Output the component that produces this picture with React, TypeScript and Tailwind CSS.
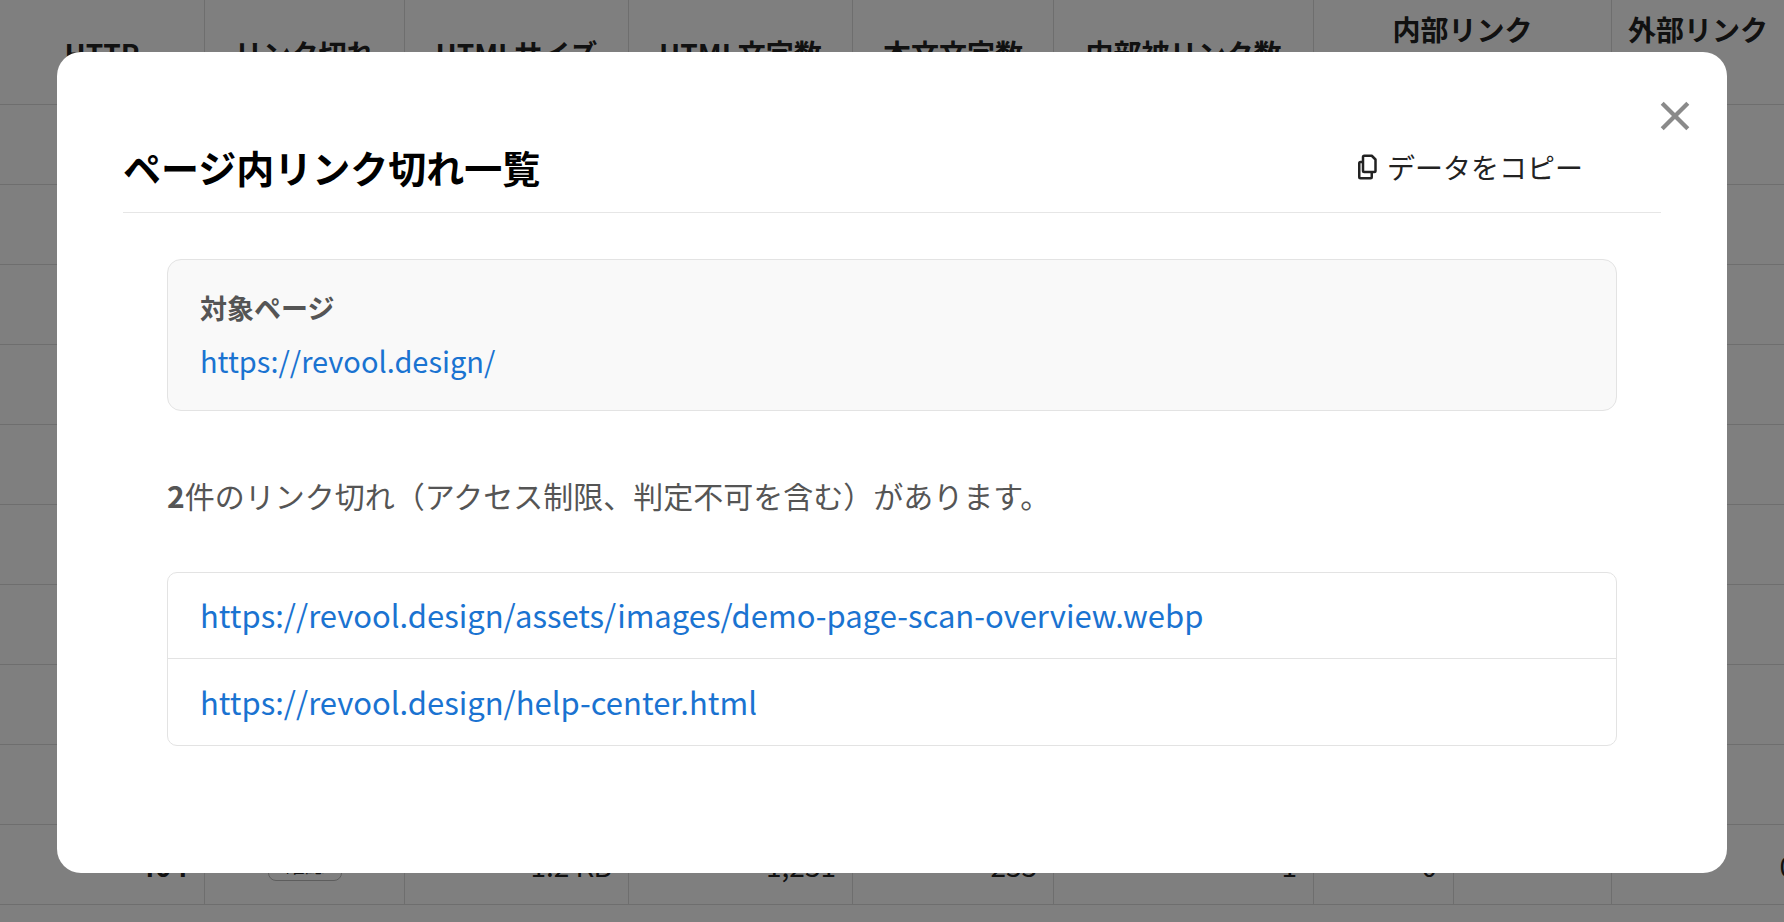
import React from "react";

const cols = [205, 200, 224, 224, 201, 260, 140, 158, 200];

function Row({ cells, h }: { cells: React.ReactNode[]; h: number }) {
  return (
    <div className="flex border-b border-[#ddd]" style={{ height: h }}>
      {cols.map((w, i) => (
        <div key={i} className="border-r border-[#ddd] flex items-center justify-end px-4 shrink-0" style={{ width: w }}>
          {cells[i]}
        </div>
      ))}
    </div>
  );
}

export default function App() {
  const font = { fontFamily: '"Noto Sans CJK JP", "Noto Sans", sans-serif' };
  return (
    <div className="relative w-[1784px] h-[922px] overflow-hidden bg-white" style={font}>
      <div className="text-[#222] text-[28px] font-bold">
        <div className="flex border-b border-[#ddd] h-[105px]">
          {["HTTP", "リンク切れ", "HTMLサイズ", "HTML文字数", "本文文字数", "内部被リンク数"].map((t, i) => (
            <div key={i} className="border-r border-[#ddd] flex items-start justify-center pt-[32px] shrink-0 whitespace-nowrap" style={{ width: cols[i] }}>{t}</div>
          ))}
          <div className="w-[298px] border-r border-[#ddd] flex justify-center pt-2 shrink-0">内部リンク</div>
          <div className="flex-1 flex justify-center pt-2 whitespace-nowrap">外部リンク</div>
        </div>
        {Array.from({ length: 9 }).map((_, i) => (
          <Row key={i} h={80} cells={[]} />
        ))}
        <Row h={80} cells={["404", <span className="mx-auto border border-[#bbb] rounded-lg px-4 text-[20px] font-normal">確認</span>, <span className="font-normal">1.2 KB</span>, <span className="font-normal">1,231</span>, <span className="font-normal">233</span>, <span className="font-normal">1</span>, <span className="font-normal">0</span>, "", <span className="font-normal">0</span>]} />
      </div>
      <div className="absolute inset-0 bg-black/50" />
      <div className="absolute left-[57px] top-[52px] w-[1670px] h-[821px] bg-white rounded-[24px]">
        <button className="absolute right-[36px] top-[48px]">
          <svg width="32" height="32" viewBox="0 0 30 30"><path d="M3 3L27 27M27 3L3 27" stroke="#8a8a8a" strokeWidth="4" /></svg>
        </button>
        <div className="mx-[66px] mt-[90px] flex items-center justify-between border-b border-[#e6e6e6] pb-[20px]">
          <h2 className="text-[38px] font-bold text-black leading-[50px]">ページ内リンク切れ一覧</h2>
          <div className="flex items-center gap-1 mr-[78px] text-[28px] text-[#222]">
            <svg width="30" height="30" viewBox="0 0 24 24" fill="none" stroke="#222" strokeWidth="2" strokeLinejoin="round"><path d="M9 3h6l3 3v9a1 1 0 0 1-1 1H9a1 1 0 0 1-1-1V4a1 1 0 0 1 1-1z" /><path d="M8 8H6a1 1 0 0 0-1 1v11a1 1 0 0 0 1 1h8a1 1 0 0 0 1-1v-4" /></svg>
            データをコピー
          </div>
        </div>
        <div className="mx-[110px] mt-[46px] bg-[#f9f9f9] border border-[#e3e3e3] rounded-[14px] px-[32px] pt-[30px] pb-[30px]">
          <div className="text-[27px] font-bold text-[#555] leading-[36px]">対象ページ</div>
          <div className="text-[29px] text-[#1a73d1] mt-[14px] leading-[40px]">https://revool.design/</div>
        </div>
        <p className="mx-[110px] mt-[62px] text-[30px] text-[#555]"><b>2</b>件のリンク切れ（アクセス制限、判定不可を含む）があります。</p>
        <div className="mx-[110px] mt-[54px] border border-[#e3e3e3] rounded-[10px] text-[31px] text-[#1a73d1]">
          <div className="h-[86px] flex items-center px-[32px] border-b border-[#e3e3e3]">https://revool.design/assets/images/demo-page-scan-overview.webp</div>
          <div className="h-[86px] flex items-center px-[32px]">https://revool.design/help-center.html</div>
        </div>
      </div>
    </div>
  );
}
